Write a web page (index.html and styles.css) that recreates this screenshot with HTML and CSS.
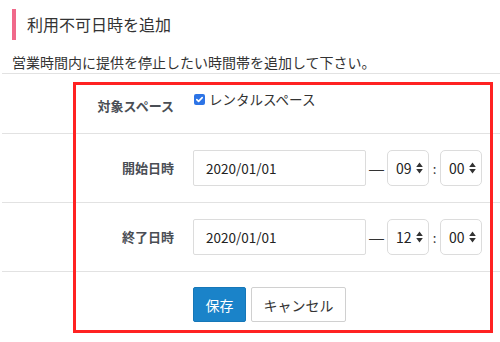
FILE: index.html
```html
<!DOCTYPE html>
<html lang="ja">
<head>
  <meta charset="UTF-8" />
  <title>利用不可日時を追加</title>
  <link rel="stylesheet" href="styles.css">
</head>
<body>

  <div class="page-head">
    <h2 class="page-title">利用不可日時を追加</h2>
  </div>
  <p class="page-desc">営業時間内に提供を停止したい時間帯を追加して下さい。</p>

  <div class="form">
    <div class="form-row first">
      <div class="form-label">対象スペース</div>
      <div class="form-field">
        <label class="check">
          <span class="check-box">
            <svg width="11" height="11" viewBox="0 0 11 11"><path d="M2.8 5.6 L4.6 7.4 L8.2 3.6" fill="none" stroke="#fff" stroke-width="1.6" stroke-linecap="round" stroke-linejoin="round"/></svg>
          </span>
          レンタルスペース
        </label>
      </div>
    </div>

    <div class="form-row">
      <div class="form-label">開始日時</div>
      <div class="form-field">
        <div class="date-input">2020/01/01</div>
        <span class="dash">—</span>
        <div class="select">09<span class="arrows"><svg width="7" height="12" viewBox="0 0 7 12"><path d="M3.5 0.5 L6.8 5 L0.2 5 Z M3.5 11.5 L6.8 7 L0.2 7 Z" fill="#333"/></svg></span></div>
        <span class="colon">:</span>
        <div class="select">00<span class="arrows"><svg width="7" height="12" viewBox="0 0 7 12"><path d="M3.5 0.5 L6.8 5 L0.2 5 Z M3.5 11.5 L6.8 7 L0.2 7 Z" fill="#333"/></svg></span></div>
      </div>
    </div>

    <div class="form-row">
      <div class="form-label">終了日時</div>
      <div class="form-field">
        <div class="date-input">2020/01/01</div>
        <span class="dash">—</span>
        <div class="select">12<span class="arrows"><svg width="7" height="12" viewBox="0 0 7 12"><path d="M3.5 0.5 L6.8 5 L0.2 5 Z M3.5 11.5 L6.8 7 L0.2 7 Z" fill="#333"/></svg></span></div>
        <span class="colon">:</span>
        <div class="select">00<span class="arrows"><svg width="7" height="12" viewBox="0 0 7 12"><path d="M3.5 0.5 L6.8 5 L0.2 5 Z M3.5 11.5 L6.8 7 L0.2 7 Z" fill="#333"/></svg></span></div>
      </div>
    </div>

    <div class="form-actions">
      <button class="btn btn-primary">保存</button>
      <button class="btn btn-default">キャンセル</button>
    </div>

    <!-- annotation box -->
    <div class="highlight"></div>
  </div>

</body>
</html>
```

FILE: styles.css
```css
body, html {
  margin: 0;
  padding: 0;
  background: #fff;
  font-family: "Noto Sans CJK JP", "Noto Sans", sans-serif;
  color: #333;
}

body {
  min-height: 342px;
}

.page-head {
  padding: 9px 12px 0 12px;
}

.page-title {
  margin: 0;
  height: 31px;
  line-height: 31px;
  border-left: 4px solid #f0698a;
  padding-left: 11px;
  font-size: 16px;
  font-weight: normal;
  color: #333;
}

.page-desc {
  margin: 0 0 0 2px;
  padding: 12px 10px 0 10px;
  height: 21px;
  line-height: 20px;
  font-size: 14px;
  color: #333;
  border-bottom: 1px solid #e2e2e2;
}

.form {
  position: relative;
  min-height: 268px;
}

.form-row {
  display: grid;
  grid-template-columns: 172px 1fr;
  column-gap: 21px;
  align-items: center;
  padding: 16px 0;
  margin-left: 2px;
  border-bottom: 1px solid #e2e2e2;
}

.form-row.first {
  align-items: start;
  padding: 15px 0 0 0;
  height: 44px;
}

.form-label {
  text-align: right;
  font-size: 13px;
  font-weight: bold;
  color: #4a4e55;
  line-height: 20px;
  margin-left: -2px;
}

.form-row.first .form-label {
  margin-top: 7px;
}

.form-field {
  display: flex;
  align-items: center;
  margin-left: -2px;
}

.check {
  display: flex;
  align-items: center;
  gap: 4px;
  font-size: 13.5px;
  line-height: 20px;
  color: #333;
  margin-left: 1px;
}

.check-box {
  width: 11px;
  height: 11px;
  border-radius: 2px;
  background-color: #2d74e6;
  display: flex;
}

.date-input {
  width: 173px;
  height: 36px;
  box-sizing: border-box;
  border: 1px solid #dcdcdc;
  border-radius: 2px;
  padding-left: 12px;
  line-height: 34px;
  font-size: 13.5px;
  color: #222;
}

.dash {
  width: 21px;
  text-align: center;
  font-family: "Liberation Sans", sans-serif;
  font-size: 15px;
  color: #333;
}

.colon {
  width: 11px;
  text-align: center;
  font-size: 13px;
  color: #333;
}

.select {
  width: 42px;
  height: 36px;
  box-sizing: border-box;
  border: 1px solid #dcdcdc;
  border-radius: 5px;
  display: flex;
  align-items: center;
  padding-left: 8px;
  font-size: 14px;
  color: #222;
}

.arrows {
  display: flex;
  margin-left: 4px;
}

.form-actions {
  display: flex;
  gap: 5px;
  padding: 15px 0 0 193px;
}

.btn {
  height: 35px;
  box-sizing: border-box;
  border-radius: 2px;
  font-family: inherit;
  font-size: 14px;
  padding: 0;
  cursor: pointer;
}

.btn-primary {
  width: 53px;
  background-color: #1a83c9;
  border: 1px solid #1677b8;
  color: #fff;
}

.btn-default {
  width: 95px;
  background-color: #fff;
  border: 1px solid #d0d0d0;
  color: #333;
}

.highlight {
  position: absolute;
  left: 73px;
  top: 8px;
  width: 420px;
  height: 251px;
  box-sizing: border-box;
  border: 3px solid #ff2222;
  pointer-events: none;
}
```
